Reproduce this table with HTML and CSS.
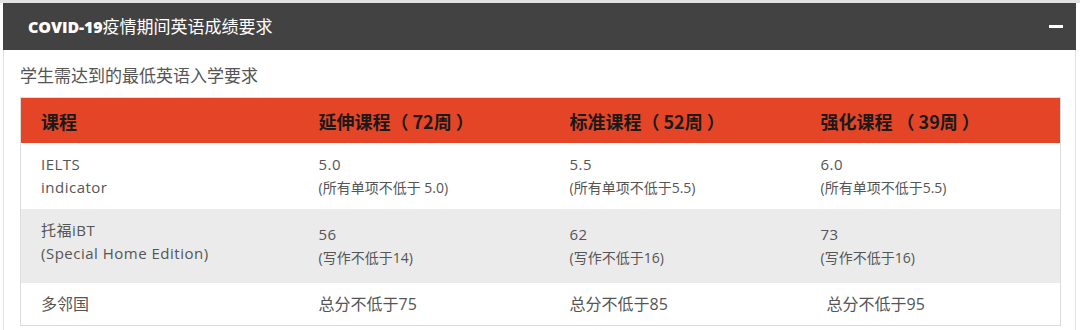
FILE: index.html
```html
<!DOCTYPE html>
<html lang="zh-CN">
<head>
<meta charset="utf-8">
<title>COVID-19疫情期间英语成绩要求</title>
<link rel="stylesheet" href="styles.css">
</head>
<body>
<div class="frame">
  <section class="panel">
    <header class="panel-head">
      <h2 class="panel-title"><b>COVID-19</b><span class="cjk">疫情期间英语成绩要求</span></h2>
      <span class="collapse" aria-label="收起"></span>
    </header>
    <div class="panel-body">
      <p class="intro">学生需达到的最低英语入学要求</p>
      <table class="req">
        <colgroup>
          <col class="c1"><col class="c2"><col class="c3"><col class="c4">
        </colgroup>
        <thead>
          <tr>
            <th>课程</th>
            <th>延伸课程（<span class="pin">72周</span>）</th>
            <th>标准课程（<span class="pin">52周</span>）</th>
            <th>强化课程 （<span class="pin">39周</span>）</th>
          </tr>
        </thead>
        <tbody>
          <tr class="r1">
            <td class="label">IELTS<br>indicator</td>
            <td><span class="main">5.0</span><br><span class="sub">(所有单项不低于 5.0)</span></td>
            <td><span class="main">5.5</span><br><span class="sub">(所有单项不低于5.5)</span></td>
            <td><span class="main">6.0</span><br><span class="sub">(所有单项不低于5.5)</span></td>
          </tr>
          <tr class="r2">
            <td class="label top">托福iBT<br>(Special Home Edition)</td>
            <td><span class="main">56</span><br><span class="sub">(写作不低于14)</span></td>
            <td><span class="main">62</span><br><span class="sub">(写作不低于16)</span></td>
            <td><span class="main">73</span><br><span class="sub">(写作不低于16)</span></td>
          </tr>
          <tr class="r3">
            <td class="label big">多邻国</td>
            <td class="big">总分不低于75</td>
            <td class="big">总分不低于85</td>
            <td class="big indent">总分不低于95</td>
          </tr>
        </tbody>
      </table>
    </div>
  </section>
</div>
</body>
</html>
```
FILE: styles.css
```css
html, body {
  margin: 0;
  padding: 0;
  background: #ffffff;
}
body {
  font-family: "Open Sans", "Noto Sans CJK SC", sans-serif;
  color: #555555;
}
.frame {
  border-top: 3px solid #e2e2e2;
  height: 327px;
  overflow: hidden;
}
.panel {
  margin: 0 4px 0 3px;
}
.panel-head {
  height: 47px;
  background: #424242;
  display: flex;
  align-items: center;
  justify-content: space-between;
  padding: 0 13px 0 25px;
}
.panel-title {
  margin: 0;
  font-size: 16px;
  line-height: 22px;
  color: #ffffff;
  font-weight: 700;
  letter-spacing: -0.1px;
}
.panel-title .cjk {
  font-weight: 400;
  font-size: 17px;
  letter-spacing: 0;
  font-family: "Noto Sans CJK SC", sans-serif;
}
.collapse {
  display: block;
  width: 14px;
  height: 3px;
  background: #ffffff;
}
.panel-body {
  border-left: 1px solid #e2e2e2;
  border-right: 1px solid #e2e2e2;
  padding: 0 15px 0 16px;
  height: 280px;
}
.intro {
  margin: 0;
  padding: 14px 0 11px;
  font-family: "Noto Sans CJK SC", sans-serif;
  font-size: 17px;
  line-height: 22px;
  color: #555555;
}
.req {
  width: 1040px;
  border-collapse: collapse;
  table-layout: fixed;
  border: 1px solid #dcdcdc;
}
.c1 { width: 278px; }
.c2 { width: 251px; }
.c3 { width: 251px; }
.c4 { width: 260px; }
.req thead tr {
  background: #e34526;
}
.req th {
  height: 45px;
  padding: 0 0 0 20px;
  text-align: left;
  font-family: "Noto Sans CJK SC", sans-serif;
  font-size: 18px;
  font-weight: 700;
  color: #1a1a1a;
  vertical-align: middle;
}
.req th .pin {
  margin: 0 4px;
}
.req td {
  padding: 10px 0 10px 20px;
  font-size: 15px;
  line-height: 23px;
  letter-spacing: 0.5px;
  vertical-align: middle;
  color: #555555;
}
.req .main {
  font-size: 15px;
}
.req .sub {
  font-size: 14px;
  letter-spacing: 0;
}
.req .r1 td {
  height: 46px;
}
.req .r2 {
  background: #ebebeb;
}
.req .r2 td {
  height: 54px;
}
.req .r2 td.top {
  vertical-align: top;
}
.req .r3 td {
  height: 22px;
  padding-top: 10px;
  padding-bottom: 10px;
}
.req td.big {
  font-size: 16px;
  line-height: 22px;
  letter-spacing: 0;
}
.req td.indent {
  padding-left: 26px;
}
```
